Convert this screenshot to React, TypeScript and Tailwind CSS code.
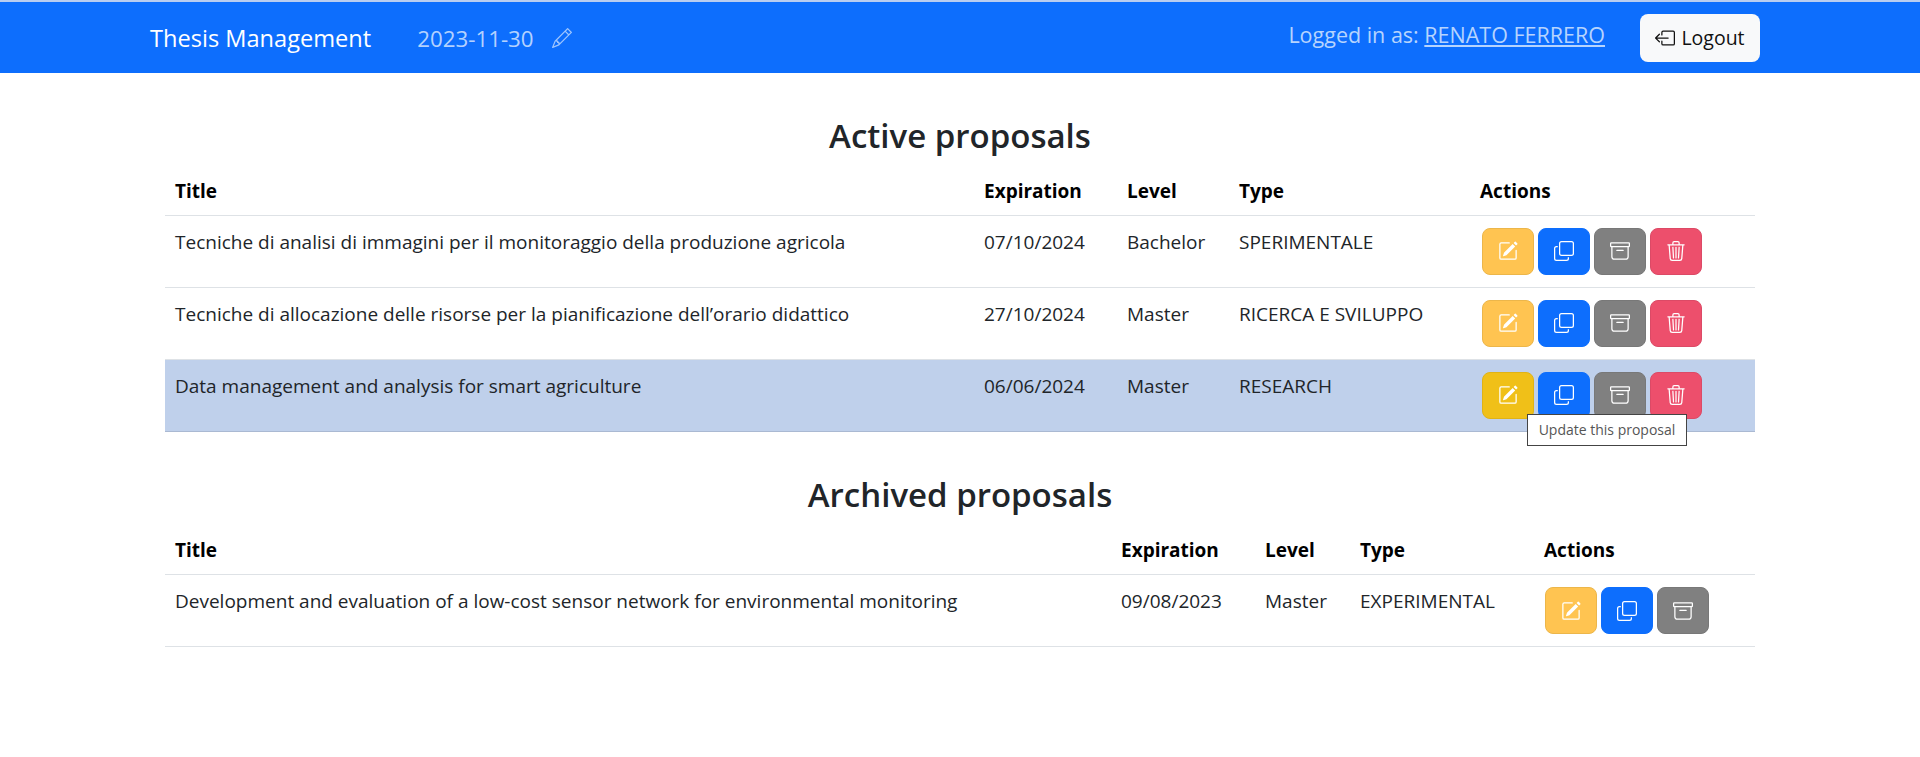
import { BsArchive, BsBoxArrowLeft, BsCopy, BsPencil, BsPencilSquare, BsTrash3 } from 'react-icons/bs'

type Proposal = { title: string; expiration: string; level: string; type: string }

const active: Proposal[] = [
  { title: 'Tecniche di analisi di immagini per il monitoraggio della produzione agricola', expiration: '07/10/2024', level: 'Bachelor', type: 'SPERIMENTALE' },
  { title: 'Tecniche di allocazione delle risorse per la pianificazione dell’orario didattico', expiration: '27/10/2024', level: 'Master', type: 'RICERCA E SVILUPPO' },
  { title: 'Data management and analysis for smart agriculture', expiration: '06/06/2024', level: 'Master', type: 'RESEARCH' },
]

const archived: Proposal[] = [
  { title: 'Development and evaluation of a low-cost sensor network for environmental monitoring', expiration: '09/08/2023', level: 'Master', type: 'EXPERIMENTAL' },
]

function Actions({ canDelete, hovered }: { canDelete: boolean; hovered: boolean }) {
  const btn = 'flex h-[47px] w-[52px] items-center justify-center rounded-lg border text-[20px] text-white'
  return (
    <div className="relative flex gap-1">
      <button className={`${btn} ${hovered ? 'border-[#e0b315] bg-[#f0c018]' : 'border-[#ecb64a] bg-[#ffc451]'}`}><BsPencilSquare /></button>
      <button className={`${btn} border-[#0d6efd] bg-[#0d6efd]`}><BsCopy /></button>
      <button className={`${btn} border-[#787878] bg-[#808080]`}><BsArchive /></button>
      {canDelete && <button className={`${btn} border-[#dc4a66] bg-[#ed4f6c]`}><BsTrash3 /></button>}
      {hovered && (
        <div className="absolute left-[45px] top-[42px] z-10 flex h-[32px] w-[160px] items-center justify-center border border-[#444] bg-white text-[14px] text-[#555]">
          Update this proposal
        </div>
      )}
    </div>
  )
}

function ProposalTable({ rows, widths, canDelete }: { rows: Proposal[]; widths: string[]; canDelete: boolean }) {
  return (
    <table className="w-full table-fixed border-collapse text-left leading-[27px] text-[#212529]">
      <colgroup>
        {widths.map(w => <col key={w} className={w} />)}
      </colgroup>
      <thead>
        <tr className="h-[57px] border-b border-[#dee2e6] font-bold text-black">
          <th className="px-[10px] pt-[10px] font-bold">Title</th>
          <th className="px-[10px] pt-[10px] font-bold">Expiration</th>
          <th className="px-[10px] pt-[10px] font-bold">Level</th>
          <th className="px-[10px] pt-[10px] font-bold">Type</th>
          <th className="px-[10px] pt-[10px] font-bold">Actions</th>
        </tr>
      </thead>
      <tbody>
        {rows.map((r, i) => {
          const hovered = canDelete && i === 2
          return (
            <tr key={r.title} className={`h-[72px] border-b align-top ${hovered ? 'border-[#aab9d2] bg-[#bfd0eb]' : 'border-[#dee2e6]'}`}>
              <td className="px-[10px] pt-[13px]">{r.title}</td>
              <td className="px-[10px] pt-[13px]">{r.expiration}</td>
              <td className="px-[10px] pt-[13px]">{r.level}</td>
              <td className="px-[10px] pt-[13px]">{r.type}</td>
              <td className={`py-3 ${canDelete ? 'pl-[12px]' : 'pl-[11px]'}`}><Actions canDelete={canDelete} hovered={hovered} /></td>
            </tr>
          )
        })}
      </tbody>
    </table>
  )
}

export default function App() {
  return (
    <div className="min-h-[757px] bg-white font-['Open_Sans','Noto_Sans',sans-serif] text-[19px]">
      <nav className="flex h-[73px] items-center border-t-2 border-[#b9cdf0] bg-[#0d6efd] pl-[150px] pr-[160px]">
        <span className="mt-[3px] text-[23.6px] text-white">Thesis Management</span>
        <span className="ml-[46px] mt-[3px] text-[22.3px] text-white/70">2023-11-30</span>
        <BsPencil className="ml-[18px] text-[20px] text-white/60" />
        <div className="ml-auto flex items-center">
          <span className="-mt-[5px] text-[21.5px] text-[#b6d4fe]">Logged in as: <a className="underline">RENATO FERRERO</a></span>
          <button className="ml-[35px] flex h-[48px] w-[120px] items-center justify-center gap-[6px] rounded-lg bg-[#f8f9fa] text-[19.5px] text-[#111]">
            <BsBoxArrowLeft className="text-[20px]" /> Logout
          </button>
        </div>
      </nav>

      <main className="mx-[165px]">
        <h2 className="mt-[40px] text-center text-[33px] font-semibold leading-[45px] text-[#212529]">Active proposals</h2>
        <ProposalTable rows={active} canDelete widths={['w-[809px]', 'w-[143px]', 'w-[112px]', 'w-[241px]', 'w-[285px]']} />
        <h2 className="mt-[40px] text-center text-[33px] font-semibold leading-[46px] text-[#212529]">Archived proposals</h2>
        <ProposalTable rows={archived} canDelete={false} widths={['w-[946px]', 'w-[144px]', 'w-[95px]', 'w-[184px]', 'w-[221px]']} />
      </main>
    </div>
  )
}
